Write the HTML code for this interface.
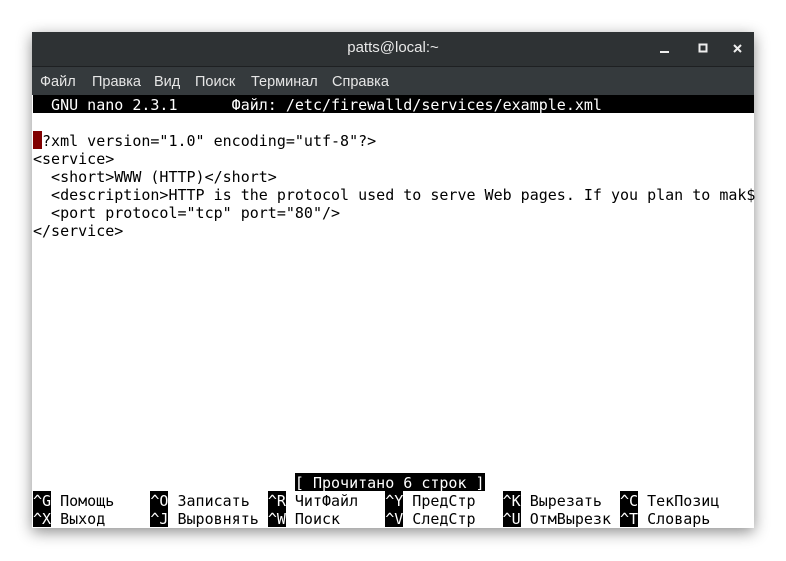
<!DOCTYPE html>
<html><head><meta charset="utf-8"><style>
body{margin:0;width:786px;height:561px;background:#fff;position:relative;overflow:hidden}
.win{position:absolute;left:32px;top:32px;width:722px;height:496px;background:#fff;box-shadow:0 4px 14px rgba(0,0,0,.45)}
.title{position:absolute;left:0;top:0;width:722px;height:34px;background:#2e3234;border-bottom:1px solid #1e2022;color:#e8e8e8;font:15px "Liberation Sans",sans-serif;text-align:center;line-height:32px}
.menu{position:absolute;left:0;top:35px;width:722px;height:28px;background:#353a3d;color:#e6e6e6;font:14.5px "Liberation Sans","DejaVu Sans",sans-serif;line-height:30px}
.menu span{position:absolute;top:0}
.term{position:absolute;left:1px;top:63px;width:721px;height:432px;font:15px "DejaVu Sans Mono",monospace;color:#000}
.r{height:18px;line-height:20px;white-space:pre;overflow:visible}
.i{background:#000;color:#fff}
.r.i,.r .i{display:inline-block;line-height:20px;height:18px;vertical-align:top}
.r.i{display:block}
.btn{position:absolute;top:0;height:34px}
</style></head><body>
<div class="win">
<div class="title">patts@local:~</div>
<svg class="btn" style="left:620px" width="100" height="34"><rect x="8" y="19" width="9" height="2" fill="#eee"/><rect x="47.5" y="12.5" width="7" height="7" fill="none" stroke="#eee" stroke-width="2"/><path d="M82 13l7 7M89 13l-7 7" stroke="#eee" stroke-width="2"/></svg>
<div class="menu"><span style="left:8px">Файл</span><span style="left:60px">Правка</span><span style="left:122px">Вид</span><span style="left:163px">Поиск</span><span style="left:219px">Терминал</span><span style="left:300px">Справка</span></div>
<div class="term"><div class="r i">  GNU nano 2.3.1      Файл: /etc/firewalld/services/example.xml                 </div><div class="r"> </div><div class="r"><span class="i" style="background:#800000;color:#800000">&lt;</span>?xml version="1.0" encoding="utf-8"?&gt;</div><div class="r">&lt;service&gt;</div><div class="r">  &lt;short&gt;WWW (HTTP)&lt;/short&gt;</div><div class="r">  &lt;description&gt;HTTP is the protocol used to serve Web pages. If you plan to mak$</div><div class="r">  &lt;port protocol="tcp" port="80"/&gt;</div><div class="r">&lt;/service&gt;</div><div class="r"></div><div class="r"></div><div class="r"></div><div class="r"></div><div class="r"></div><div class="r"></div><div class="r"></div><div class="r"></div><div class="r"></div><div class="r"></div><div class="r"></div><div class="r"></div><div class="r"></div><div class="r">                             <span class="i">[ Прочитано 6 строк ]</span></div><div class="r"><span class="i">^G</span> Помощь    <span class="i">^O</span> Записать  <span class="i">^R</span> ЧитФайл   <span class="i">^Y</span> ПредСтр   <span class="i">^K</span> Вырезать  <span class="i">^C</span> ТекПозиц</div><div class="r"><span class="i">^X</span> Выход     <span class="i">^J</span> Выровнять <span class="i">^W</span> Поиск     <span class="i">^V</span> СледСтр   <span class="i">^U</span> ОтмВырезк <span class="i">^T</span> Словарь</div></div>
</div>
</body></html>
